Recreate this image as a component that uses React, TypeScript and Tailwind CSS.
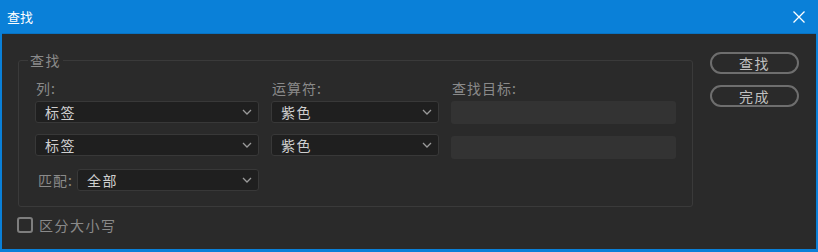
import React from "react";

const font = { fontFamily: '"Noto Sans CJK SC", "Microsoft YaHei", sans-serif' };

function Chevron() {
  return (
    <svg width="10" height="6" viewBox="0 0 10 6" className="shrink-0">
      <polyline points="1,1 5,5 9,1" fill="none" stroke="#9a9a9a" strokeWidth="1.3" />
    </svg>
  );
}

function Select({ value, className }: { value: string; className?: string }) {
  return (
    <div
      className={
        "h-[22px] flex items-center justify-between rounded-[3px] border border-[#383838] bg-[#1f1f1f] pl-[9px] pr-[6px] " +
        (className ?? "")
      }
    >
      <span className="text-[14px] leading-none tracking-[1.5px] text-[#cfcfcf]">{value}</span>
      <Chevron />
    </div>
  );
}

function Label({ children, className }: { children: React.ReactNode; className?: string }) {
  return (
    <div className={"h-[20px] flex items-center text-[14px] leading-none tracking-[1px] text-[#8a8a8a] " + (className ?? "")}>
      {children}
    </div>
  );
}

function Btn({ children }: { children: React.ReactNode }) {
  return (
    <div className="h-[22px] w-[89px] flex items-center justify-center rounded-full border-2 border-[#6e6e6e] text-[14px] leading-none tracking-[1.5px] text-[#c0c0c0]">
      {children}
    </div>
  );
}

export default function App() {
  return (
    <div
      style={font}
      className="w-[818px] h-[252px] flex flex-col border-x-2 border-b-[3px] border-[#0a80d8] bg-[#2a2a2a]"
    >
      <div className="h-[34px] shrink-0 bg-[#0a80d8] border-b border-[#0872c2] flex items-center justify-between pl-[5px] pr-[11px]">
        <span className="text-[13px] text-white leading-none">查找</span>
        <svg width="12" height="12" viewBox="0 0 12 12">
          <path d="M0.5 0.5 L11.5 11.5 M11.5 0.5 L0.5 11.5" stroke="#ffffff" strokeWidth="1.3" />
        </svg>
      </div>
      <div className="flex-1 flex pl-[16px] pt-[16px]">
        <div className="flex flex-col w-[675px]">
          <fieldset className="border border-[#3a3a3a] rounded-[3px] px-[16px] pt-[8px] pb-[15px]">
            <legend className="ml-[-7px] px-[2px] h-[20px] flex items-center text-[14px] leading-none tracking-[1.5px] text-[#8a8a8a]">
              查找
            </legend>
            <div className="flex gap-[12px]">
              <div className="flex flex-col w-[224px]">
                <Label className="ml-[1px]">列:</Label>
                <Select value="标签" className="mt-[3px]" />
                <Select value="标签" className="mt-[11px]" />
              </div>
              <div className="flex flex-col w-[168px]">
                <Label className="ml-[1px]">运算符:</Label>
                <Select value="紫色" className="mt-[3px]" />
                <Select value="紫色" className="mt-[11px]" />
              </div>
              <div className="flex flex-col w-[225px]">
                <Label className="ml-[1px]">查找目标:</Label>
                <div className="mt-[3px] h-[23px] rounded-[3px] bg-[#333333]" />
                <div className="mt-[12px] h-[23px] rounded-[3px] bg-[#333333]" />
              </div>
            </div>
            <div className="flex items-center mt-[10px] w-[224px]">
              <Label className="ml-[3px] w-[39px]">匹配:</Label>
              <Select value="全部" className="flex-1" />
            </div>
          </fieldset>
          <div className="flex items-center mt-[10px] ml-[-1px]">
            <div className="w-[16px] h-[16px] rounded-[3px] border-2 border-[#7e7e7e]" />
            <span className="ml-[6px] text-[14px] leading-none tracking-[1.5px] text-[#8a8a8a]">区分大小写</span>
          </div>
        </div>
        <div className="ml-[17px] mt-[2px] flex flex-col gap-[11px]">
          <Btn>查找</Btn>
          <Btn>完成</Btn>
        </div>
      </div>
    </div>
  );
}
